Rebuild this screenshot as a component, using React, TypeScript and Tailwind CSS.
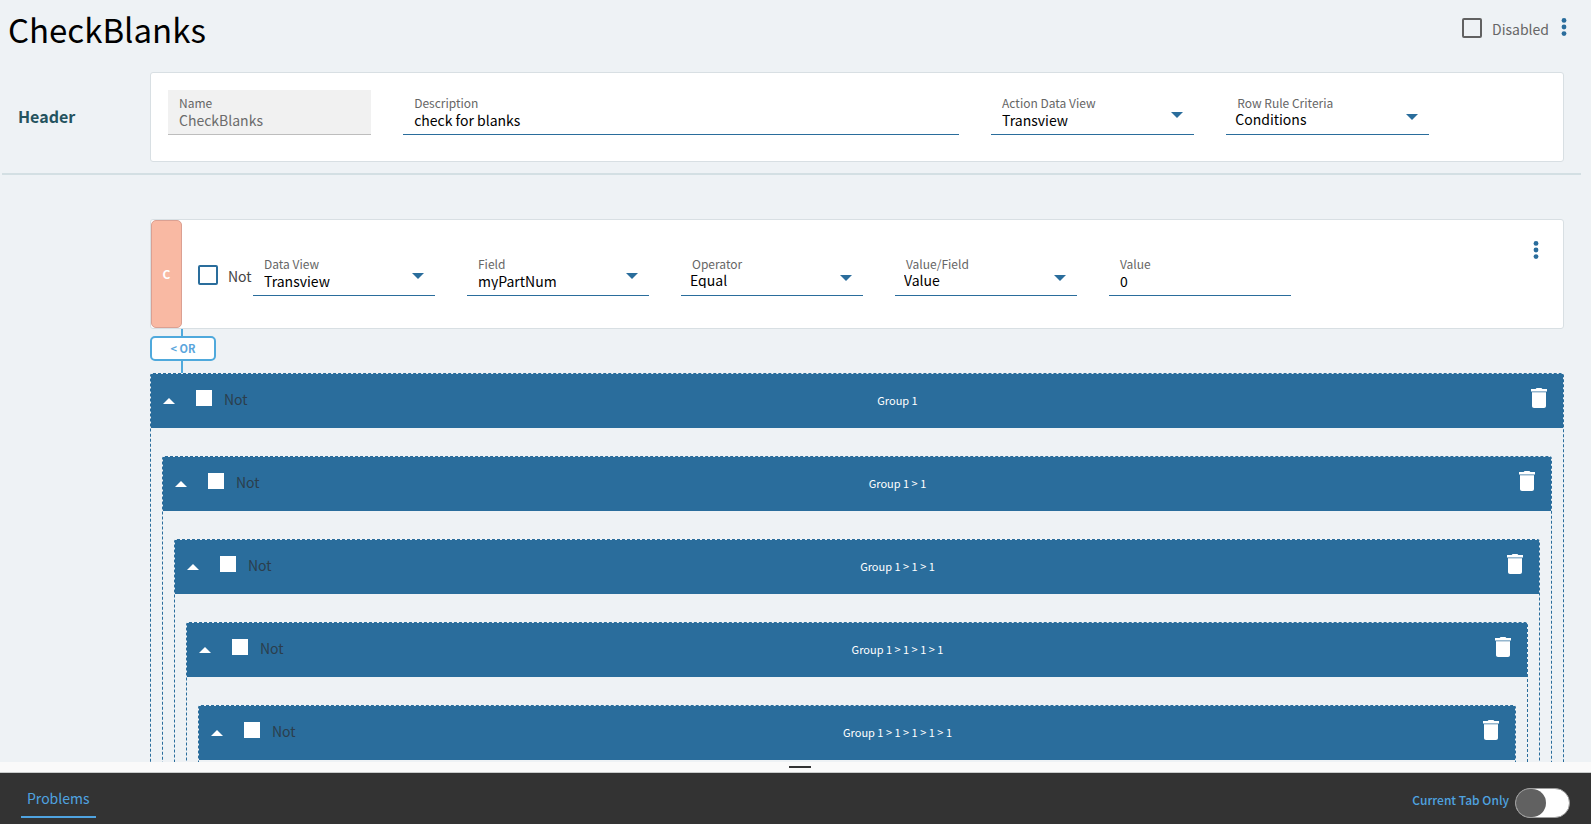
import { useState } from 'react';
import type { ReactNode } from 'react';

type FieldProps = {
  id: string;
  label: string;
  value: string;
  disabled?: boolean;
};

type DropdownProps = FieldProps & {
  kind?: 'combo' | 'select';
};

const GROUP_DEPTH = 5;

function MoreIcon() {
  return (
    <svg width="6" height="18" viewBox="0 0 6 18" fill="currentColor" aria-hidden="true">
      <circle cx="3" cy="2.4" r="2.4" />
      <circle cx="3" cy="9" r="2.4" />
      <circle cx="3" cy="15.6" r="2.4" />
    </svg>
  );
}

function TrashIcon() {
  return (
    <svg width="16" height="20" viewBox="0 0 16 20" fill="currentColor" aria-hidden="true">
      <path d="M0 1h4.6L5.6 0h4.8l1 1H16v2.6H0z" />
      <path d="M1 4.2h14V18c0 1.1-.9 2-2 2H3c-1.100 0-2-.9-2-2z" />
    </svg>
  );
}

function TextField({ id, label, value, disabled }: FieldProps) {
  const [text, setText] = useState(value);

  return (
    <div
      className={
        disabled
          ? 'flex h-[45px] flex-col border-b border-[#bdbdbd] bg-[#f1f1f1] px-[11px] pt-[5px]'
          : 'flex h-[45px] flex-col border-b border-[#2a6d9c] px-[11px] pt-[5px]'
      }
    >
      <label htmlFor={id} className="text-xs leading-4 text-[#666]">
        {label}
      </label>
      <input
        id={id}
        type="text"
        value={text}
        disabled={disabled}
        onChange={(e) => setText(e.target.value)}
        className="w-full bg-transparent text-sm leading-[18px] outline-none disabled:text-[#6b6b6b]"
      />
    </div>
  );
}

function Dropdown({ id, label, value, kind = 'combo' }: DropdownProps) {
  return (
    <div className="relative flex h-[45px] flex-col border-b border-[#2a6d9c] pt-[5px]">
      <label htmlFor={id} className="px-[11px] text-xs leading-4 text-[#666]">
        {label}
      </label>
      <select
        id={id}
        defaultValue={value}
        className={
          kind === 'combo'
            ? 'h-[18px] w-full appearance-none bg-transparent pl-[11px] text-sm leading-[18px] outline-none'
            : 'h-4 w-full appearance-none bg-transparent pl-[9px] text-sm leading-4 outline-none'
        }
      >
        <option>{value}</option>
      </select>
      <svg
        viewBox="0 0 12 6"
        fill="currentColor"
        aria-hidden="true"
        className={
          kind === 'combo'
            ? 'pointer-events-none absolute right-[11px] top-[22px] h-[6px] w-3 text-[#2a6d9c]'
            : 'pointer-events-none absolute right-[11px] top-6 h-[6px] w-3 text-[#2a6d9c]'
        }
      >
        <path d="M0 0h12L6 6z" />
      </svg>
    </div>
  );
}

function Group({ level, children }: { level: number; children?: ReactNode }) {
  const name = 'Group ' + Array(level).fill('1').join(' > ');

  return (
    <section className="min-h-[200px] rounded-t-[3px] border border-dashed border-[#2a6d9c]">
      <header className="flex h-[54px] items-start bg-[#2a6d9c] pr-4 text-white">
        <div className="flex w-[113px] shrink-0 items-start">
          <button type="button" aria-label="Collapse group" className="ml-3 mt-6">
            <svg width="12" height="6" viewBox="0 0 12 6" fill="currentColor" className="block">
              <path d="M0 6h12L6 0z" />
            </svg>
          </button>
          <label className="ml-[21px] mt-4 flex items-start text-sm text-[#2b3e4c]">
            <input type="checkbox" className="h-4 w-4 appearance-none bg-white checked:bg-[#4fa3e0]" />
            <span className="ml-3 mt-px leading-4">Not</span>
          </label>
        </div>
        <h3 className="mt-[18px] flex-1 text-center text-[11px] leading-4">{name}</h3>
        <button type="button" aria-label="Delete group" className="mt-[14px]">
          <TrashIcon />
        </button>
      </header>
      {children && <div className="px-[11px] pt-7">{children}</div>}
    </section>
  );
}

function renderGroups(level: number): ReactNode {
  if (level > GROUP_DEPTH) return null;
  return <Group level={level}>{renderGroups(level + 1)}</Group>;
}

export default function App() {
  const [currentTabOnly, setCurrentTabOnly] = useState(false);

  return (
    <div className="flex h-screen flex-col bg-[#eef2f5] font-['Noto_Sans_CJK_SC',sans-serif] text-black">
      <main className="flex-1 overflow-hidden">
        <div className="flex h-[72px] items-start justify-between pl-2 pr-6">
          <h1 className="mt-[6px] text-[33px] leading-[46px]">CheckBlanks</h1>
          <div className="flex items-start pt-[18px]">
            <label className="flex items-start text-sm text-[#666]">
              <input
                type="checkbox"
                className="h-5 w-5 appearance-none rounded-[2px] border-2 border-[#616161] checked:bg-[#616161]"
              />
              <span className="ml-[10px] mt-px leading-5">Disabled</span>
            </label>
            <button type="button" aria-label="More actions" className="ml-3 text-[#2a6d9c]">
              <MoreIcon />
            </button>
          </div>
        </div>

        <section className="flex pr-[27px]">
          <h2 className="w-[150px] shrink-0 pl-[18px] pt-8 text-base font-bold leading-6 text-[#24535f]">Header</h2>
          <div className="grid h-[90px] flex-1 grid-cols-12 rounded-[3px] border border-[#d8dfe3] bg-white pl-px pt-[17px]">
            <div className="col-span-2 px-4">
              <TextField id="name" label="Name" value="CheckBlanks" disabled />
            </div>
            <div className="col-span-5 px-4">
              <TextField id="description" label="Description" value="check for blanks" />
            </div>
            <div className="col-span-2 px-4">
              <Dropdown id="actionDataView" label="Action Data View" value="Transview" />
            </div>
            <div className="col-span-2 px-4">
              <Dropdown id="rowRuleCriteria" label="Row Rule Criteria" value="Conditions" kind="select" />
            </div>
          </div>
        </section>

        <hr className="ml-[2px] mr-[10px] mt-[11px] border-t-2 border-[#d3dfe3]" />

        <div className="pl-[150px] pr-[27px] pt-11">
          {/* Condition */}
          <section className="flex h-[110px] rounded-[3px] border border-[#d8dfe3] bg-white">
            <div className="flex w-[31px] shrink-0 items-center justify-center rounded-[5px] border border-[#dba092] bg-[#f9b9a3] text-xs font-bold text-white">
              C
            </div>
            <label className="flex w-[55px] shrink-0 items-start pl-4 pt-[45px] text-sm text-[#444]">
              <input
                type="checkbox"
                className="h-5 w-5 shrink-0 appearance-none rounded-[2px] border-2 border-[#2a6d9c] checked:bg-[#2a6d9c]"
              />
              <span className="ml-[10px] mt-px leading-5">Not</span>
            </label>
            <div className="grid flex-1 grid-cols-6 pt-[31px]">
              <div className="px-4">
                <Dropdown id="dataView" label="Data View" value="Transview" />
              </div>
              <div className="px-4">
                <Dropdown id="field" label="Field" value="myPartNum" />
              </div>
              <div className="px-4">
                <Dropdown id="operator" label="Operator" value="Equal" kind="select" />
              </div>
              <div className="px-4">
                <Dropdown id="valueField" label="Value/Field" value="Value" kind="select" />
              </div>
              <div className="px-4">
                <TextField id="value" label="Value" value="0" />
              </div>
            </div>
            <div className="w-[42px] shrink-0 pl-3 pt-5 text-[#2a6d9c]">
              <button type="button" aria-label="Condition actions">
                <MoreIcon />
              </button>
            </div>
          </section>

          {/* Connector */}
          <div className="flex w-[66px] flex-col items-center">
            <div className="mr-[2px] h-[7px] w-[2px] bg-[#4fa9dc]" />
            <button
              type="button"
              className="flex h-[25px] w-full justify-center rounded-[5px] border-2 border-[#4fa9dc] bg-white pt-[2px] text-[11px] font-bold leading-4 text-[#5aa5dc]"
            >
              &lt; OR
            </button>
            <div className="mr-[2px] h-3 w-[2px] bg-[#4fa9dc]" />
          </div>

          {renderGroups(1)}
        </div>
      </main>

      <div className="flex h-[11px] shrink-0 items-center justify-center border-b border-[#c9cccc] bg-[#fafafa] pl-2">
        <div className="h-[2px] w-[22px] bg-[#333]" />
      </div>

      <footer className="flex h-[51px] shrink-0 items-start justify-between bg-[#333] px-[21px]">
        <button
          type="button"
          className="mt-[14px] h-[31px] border-b-2 border-[#4fa3e0] px-[6px] pb-2 text-sm leading-5 text-[#4fa3e0]"
        >
          Problems
        </button>
        <label className="flex items-start text-xs font-medium text-[#4fa3e0]">
          <span className="mr-[6px] mt-[18px] leading-[18px]">Current Tab Only</span>
          <input
            type="checkbox"
            role="switch"
            checked={currentTabOnly}
            onChange={(e) => setCurrentTabOnly(e.target.checked)}
            className="mt-[15px] h-[30px] w-[55px] appearance-none rounded-full border border-[#9e9e9e] bg-white before:block before:h-7 before:w-[30px] before:rounded-full before:bg-[#616161] checked:before:ml-[23px]"
          />
        </label>
      </footer>
    </div>
  );
}
